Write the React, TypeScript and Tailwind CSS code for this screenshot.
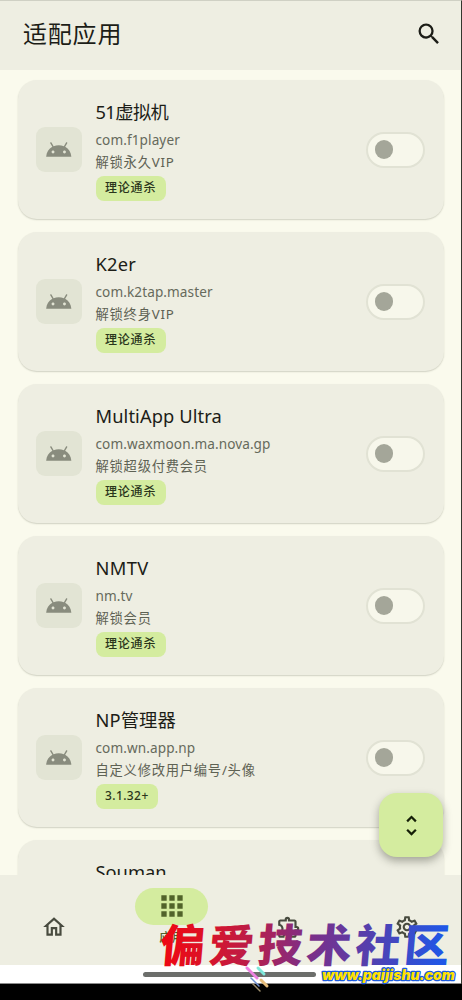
import { MdSearch, MdUnfoldMore, MdOutlineHome, MdApps, MdOutlineExtension, MdOutlineSettings } from "react-icons/md";

type AppItem = {
  name: string;
  pkg: string;
  note: string;
  tag: string;
  nameCls: string;
  tagCls: string;
};

const apps: AppItem[] = [
  { name: "51虚拟机", pkg: "com.f1player", note: "解锁永久VIP", tag: "理论通杀", nameCls: "tracking-[-0.6px]", tagCls: "tracking-[0.8px]" },
  { name: "K2er", pkg: "com.k2tap.master", note: "解锁终身VIP", tag: "理论通杀", nameCls: "tracking-[0.2px]", tagCls: "tracking-[0.8px]" },
  { name: "MultiApp Ultra", pkg: "com.waxmoon.ma.nova.gp", note: "解锁超级付费会员", tag: "理论通杀", nameCls: "tracking-[0.1px]", tagCls: "tracking-[0.8px]" },
  { name: "NMTV", pkg: "nm.tv", note: "解锁会员", tag: "理论通杀", nameCls: "tracking-[0.4px]", tagCls: "tracking-[0.8px]" },
  { name: "NP管理器", pkg: "com.wn.app.np", note: "自定义修改用户编号/头像", tag: "3.1.32+", nameCls: "tracking-[0.1px]", tagCls: "tracking-[0.4px]" },
  { name: "Souman", pkg: "com.souman.app", note: "解锁会员", tag: "理论通杀", nameCls: "tracking-[0px]", tagCls: "tracking-[0.8px]" },
];

function AndroidIcon() {
  return (
    <svg viewBox="0 0 24 24" className="size-[27.5px] fill-[#898c7e]">
      <path d="M17.6 9.48l1.84-3.18c.16-.31.04-.69-.26-.85-.29-.15-.65-.06-.83.22l-1.88 3.24c-2.86-1.21-6.08-1.21-8.94 0L5.65 5.67c-.19-.29-.58-.38-.87-.2-.28.18-.37.54-.22.83L6.4 9.48C3.3 11.25 1.28 14.44 1 18h22c-.28-3.56-2.3-6.75-5.4-8.52zM7 15.25c-.69 0-1.25-.56-1.25-1.25s.56-1.25 1.25-1.25 1.25.56 1.25 1.25-.56 1.25-1.25 1.25zm10 0c-.69 0-1.25-.56-1.25-1.25s.56-1.25 1.25-1.25 1.25.56 1.25 1.25-.56 1.25-1.25 1.25z" />
    </svg>
  );
}

function AppCard({ app }: { app: AppItem }) {
  return (
    <div className="flex h-[139px] shrink-0 items-center rounded-[19px] bg-[#eeeee2] pr-[19px] pl-[18.5px] shadow-[0_1px_1.5px_rgba(60,64,45,0.22)]">
      <div className="flex size-[45.5px] shrink-0 items-center justify-center rounded-[9px] bg-[#e2e4d4]">
        <AndroidIcon />
      </div>
      <div className="ml-[14px] flex grow flex-col items-start whitespace-nowrap">
        <div className={`h-[30px] text-[18.3px] leading-[26px] text-[#1c1d17] ${app.nameCls}`}>{app.name}</div>
        <div className="h-[22px] text-[13.6px] leading-[22px] tracking-[0.09px] text-[#666a5c]">{app.pkg}</div>
        <div className="h-[25px] text-[13.3px] leading-[22px] tracking-[0.75px] text-[#5e6254]">{app.note}</div>
        <div className={`h-[25px] rounded-[8px] bg-[#d4ec9f] px-[9.5px] text-[12px] leading-[24px] font-medium text-[#2a351b] ${app.tagCls}`}>{app.tag}</div>
      </div>
      <div className="flex h-[36px] w-[59px] shrink-0 items-center rounded-full border-2 border-[#e1e2d4] bg-[#f7f7eb] pl-[7px]">
        <div className="size-[18.5px] rounded-full bg-[#a4a699]" />
      </div>
    </div>
  );
}

function Watermark() {
  return (
    <div className="pointer-events-none absolute top-[915px] left-[150px] h-[80px] w-[312px]">
      <svg viewBox="0 0 312 80" className="h-[80px] w-[312px]">
        <defs>
          <linearGradient id="brand" gradientUnits="userSpaceOnUse" x1="10" y1="0" x2="300" y2="0">
            <stop offset="0" stopColor="#f10610" />
            <stop offset="0.16" stopColor="#dc1226" />
            <stop offset="0.33" stopColor="#b81e4c" />
            <stop offset="0.5" stopColor="#812d83" />
            <stop offset="0.75" stopColor="#5041b2" />
            <stop offset="1" stopColor="#1d58ea" />
          </linearGradient>
        </defs>
        <text
          transform="skewX(-5)"
          x="13"
          y="46.5"
          textLength="289"
          fontSize="45"
          fontWeight="900"
          fill="url(#brand)"
          fontFamily="'Noto Sans CJK SC', sans-serif"
        >
          偏爱技术社区
        </text>
        <g strokeLinecap="round">
          <path d="M97 53l10 10" stroke="#ee82e3" strokeWidth="3" />
          <path d="M108 53l6 6" stroke="#7fe8da" strokeWidth="3" />
          <path d="M101 63l8 8" stroke="#6f8fd0" strokeWidth="1.5" />
          <path d="M111 65l6 6" stroke="#e6bd7c" strokeWidth="3" />
          <path d="M103 69l7 7" stroke="#9c8d6c" strokeWidth="1.5" />
        </g>
        <text
          x="172"
          y="65"
          textLength="133"
          lengthAdjust="spacingAndGlyphs"
          fontSize="14.5"
          fontWeight="900"
          fontStyle="italic"
          fill="#ffe100"
          stroke="#1b5be0"
          strokeWidth="2.6"
          strokeLinejoin="round"
          paintOrder="stroke"
          fontFamily="Inter, sans-serif"
        >
          www.paijishu.com
        </text>
      </svg>
    </div>
  );
}

export default function App() {
  return (
    <div className="relative flex h-[1000px] w-[462px] flex-col overflow-hidden bg-black font-['Noto_Sans','Noto_Sans_CJK_SC',sans-serif]">
      <div className="flex h-[984px] flex-col border-t border-r border-t-[#cfd0c4] border-r-[#34372f] bg-[#fafaed]">
        <header className="flex h-[69px] shrink-0 items-center justify-between bg-[#eeeee2] pr-[18px] pb-[4px] pl-[23px]">
          <h1 className="text-[24px] leading-[32px] tracking-[0.8px] text-[#1c1d17]">适配应用</h1>
          <MdSearch className="size-[28px] text-[#1c1d17]" />
        </header>
        <main className="flex h-[805px] shrink-0 flex-col gap-[13px] overflow-hidden pt-[10px] pr-[17.5px] pl-[17.5px]">
          {apps.map((app) => (
            <AppCard key={app.name} app={app} />
          ))}
        </main>
        <nav className="flex h-[90px] shrink-0 justify-between bg-[#eeeee2] px-[18px] text-[#484b3f]">
          <div className="flex w-[72px] items-center justify-center pt-[13px]">
            <MdOutlineHome className="size-[26px]" />
          </div>
          <div className="flex w-[72px] flex-col items-center pt-[13px]">
            <div className="flex h-[36.5px] w-[73px] shrink-0 items-center justify-center rounded-full bg-[#d4ec9f]">
              <MdApps className="size-[32px] text-[#51632a]" />
            </div>
            <div className="mt-[4px] text-[12.5px] leading-[17px] font-medium text-[#51632a]">应用</div>
          </div>
          <div className="flex w-[72px] items-center justify-center pt-[13px]">
            <MdOutlineExtension className="size-[26px]" />
          </div>
          <div className="flex w-[72px] items-center justify-center pt-[13px]">
            <MdOutlineSettings className="size-[26px]" />
          </div>
        </nav>
        <div className="flex grow justify-center border-b border-[#8b8b8b] bg-white pt-[7px] pr-[3px]">
          <div className="h-[4.5px] w-[173px] rounded-full bg-[#6c6e6b]" />
        </div>
      </div>
      <button className="absolute top-[793px] left-[379px] flex size-[64px] items-center justify-center rounded-[18px] bg-[#d4ec9f] shadow-[0_4px_8px_rgba(50,52,40,0.4)]">
        <MdUnfoldMore className="size-[27px] text-[#161f08]" />
      </button>
      <Watermark />
    </div>
  );
}
